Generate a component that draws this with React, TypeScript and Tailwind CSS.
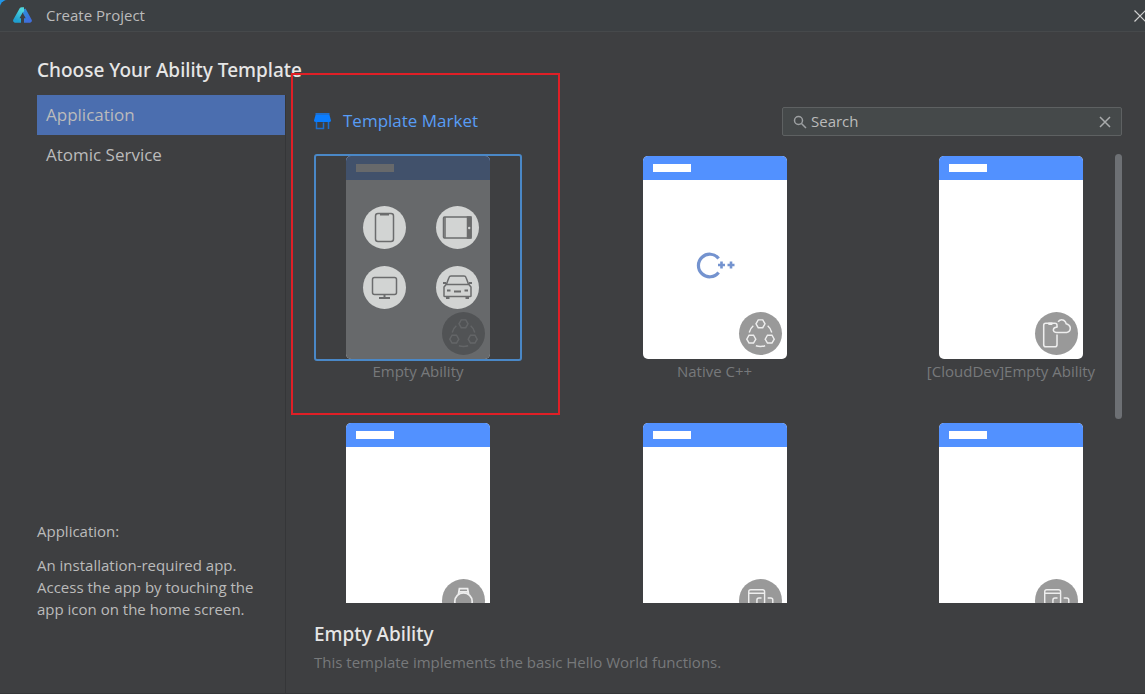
import { useState } from 'react';
import type { ReactNode } from 'react';

interface Template {
    id: string;
    name?: string;
    badge: ReactNode;
    art?: ReactNode;
}

const Logo = () => (
    <svg width="19" height="17" viewBox="0 0 19 17" fill="none" strokeWidth="4.600" strokeLinejoin="round" aria-hidden="true">
        <defs>
            <linearGradient id="logoLeft" x1="0.6" y1="0" x2="0.2" y2="1">
                <stop offset="0" stopColor="#4fd6dc" />
                <stop offset="1" stopColor="#1f9fd0" />
            </linearGradient>
            <linearGradient id="logoRight" x1="0.2" y1="0" x2="0.8" y2="1">
                <stop offset="0" stopColor="#2c8fd8" />
                <stop offset="1" stopColor="#3f6fdc" />
            </linearGradient>
        </defs>
        <path d="M10.500 2.500 L16.500 13.500 H11" stroke="url(#logoRight)" />
        <path d="M11 2.500 H8.700 L2.500 13.500 H8" stroke="url(#logoLeft)" />
    </svg>
);

const StoreIcon = () => (
    <svg width="17" height="18" viewBox="0 0 17 18" aria-hidden="true">
        <rect x="1.500" y="1" width="14" height="2" fill="#1c6fd0" />
        <path d="M1.500 3 H15.500 L17 8.500 Q17 10 15 10 H2 Q0 10 0 8.500 Z" fill="#0a7dff" />
        <path d="M2.500 10 V16.500 H9.500 V10.500 M14.500 10 V17" fill="none" stroke="#1c6fd0" strokeWidth="1.500" />
    </svg>
);

const NodesIcon = () => (
    <svg width="43" height="43" viewBox="0 0 42 42" fill="none" stroke="currentColor" strokeWidth="1.400" aria-hidden="true">
        <path d="M18.800 7.700 h4.400 l2.200 3.800 l-2.200 3.800 h-4.400 l-2.200 -3.800 Z" />
        <path d="M9.800 22.700 h4.400 l2.200 3.800 l-2.200 3.800 h-4.400 l-2.200 -3.800 Z" />
        <path d="M27.800 22.700 h4.400 l2.200 3.800 l-2.200 3.800 h-4.400 l-2.200 -3.800 Z" />
        <path d="M10 20 Q11 16 14 13.500 M28 13.500 Q31 16 32 20 M16.500 33 Q21 34.500 25.500 33" />
    </svg>
);

const CloudIcon = () => (
    <svg width="43" height="43" viewBox="0 0 42 42" fill="none" stroke="currentColor" strokeWidth="1.500" aria-hidden="true">
        <path d="M21.500 22 V32 Q21.500 34 19.500 34 H10.500 Q8.500 34 8.500 32 V13 Q8.500 11 10.500 11 H19.500 Q21.500 11 21.500 13 V15" />
        <path d="M13 11.500 H17" strokeWidth="2.500" />
        <path d="M21 20 Q17.500 19.500 18 17 Q18.500 14.500 22 15 M22.500 9.500 Q25 6.500 28 8 Q30 9 30.500 11.500 Q34 12.500 34.500 15.500 Q34.500 19.500 31 20 H21" />
    </svg>
);

const WatchIcon = () => (
    <svg width="43" height="43" viewBox="0 0 42 42" fill="none" stroke="currentColor" strokeWidth="1.700" aria-hidden="true">
        <circle cx="21" cy="22" r="8.500" />
        <path d="M16 15 L17 9.500 H25 L26 15 M17 12.500 H25 M16 29 L17 34.500 H25 L26 29" />
    </svg>
);

const DevicesIcon = () => (
    <svg width="43" height="43" viewBox="0 0 42 42" fill="none" stroke="currentColor" strokeWidth="1.400" aria-hidden="true">
        <path d="M15 25 H12 Q9.500 25 9.500 22.500 V12.500 Q9.500 10.500 11.500 10.500 H23 Q25 10.500 25 12.500 V22.500 Q25 25 22.500 25 M9.500 14 H25" />
        <path d="M22 18.500 H19.500 Q17.500 18.500 17.500 20.500 V31 H24 M28 18.500 H31 Q33 18.500 33 20.500 V31 H29" />
    </svg>
);

const CppArt = () => (
    <svg width="40" height="28" viewBox="0 0 40 28" fill="none" stroke="#7493cf" strokeWidth="3.200" className="absolute left-[53px] top-[95px]" aria-hidden="true">
        <path d="M22.600 7.500 A11.300 11.300 0 1 0 22.600 21.500" />
        <path d="M22 14 H29 M25.500 10.500 V17.500 M31.500 14 H38.500 M35 10.500 V17.500" strokeWidth="2.600" />
    </svg>
);

const devices = [
    {
        id: 'phone',
        drawing: (
            <>
                <rect x="12.500" y="7.500" width="18" height="28" rx="2.500" />
                <path d="M17 8.500 H26" strokeWidth="2.200" />
            </>
        ),
    },
    {
        id: 'tablet',
        drawing: (
            <>
                <rect x="7.500" y="11" width="27.500" height="21" rx="1" />
                <path d="M9 11 V32" strokeWidth="1.500" />
                <rect x="31.500" y="11" width="3.500" height="21" fill="#6b6c6d" />
                <circle cx="33.200" cy="22" r="1.200" fill="#d2d4d3" stroke="none" />
            </>
        ),
    },
    {
        id: 'monitor',
        drawing: (
            <>
                <rect x="9.500" y="11.500" width="24" height="17" rx="2" />
                <path d="M21.500 29 V32 M16 32 H27" strokeWidth="2" />
            </>
        ),
    },
    {
        id: 'car',
        drawing: (
            <>
                <path d="M8 30 V21 L10.500 18 L13 11.500 Q13.500 10 15 10 H28 Q29.500 10 30 11.500 L32.500 18 L35 21 V30 Q35 30.500 34 30.500 H9 Q8 30.500 8 30 Z M10.500 18.500 H32.500" />
                <path d="M7 17 H10 M33 17 H36 M11 24.500 H14.500 M28.500 24.500 H32 M18 25.500 H25 M10 32 H13.500 M29.500 32 H33" strokeWidth="2" />
            </>
        ),
    },
];

const DeviceOverlay = () => (
    <div className="absolute inset-0 grid grid-cols-[43px_43px] content-start gap-x-[30px] gap-y-[17px] bg-[#3c3f41]/78 pl-[17px] pt-[50px]">
        {devices.map((device) => (
            <span key={device.id} className="rounded-full bg-[#d2d4d3]">
                <svg width="43" height="43" viewBox="0 0 43 43" fill="none" stroke="#6b6c6d" strokeWidth="1.500" aria-hidden="true">
                    {device.drawing}
                </svg>
            </span>
        ))}
    </div>
);

const templates: Template[] = [
    { id: 'empty', name: 'Empty Ability', badge: <NodesIcon />, art: <DeviceOverlay /> },
    { id: 'native', name: 'Native C++', badge: <NodesIcon />, art: <CppArt /> },
    { id: 'cloud', name: '[CloudDev]Empty Ability', badge: <CloudIcon /> },
    { id: 'watch', badge: <WatchIcon /> },
    { id: 'devices', badge: <DevicesIcon /> },
    { id: 'devices2', badge: <DevicesIcon /> },
];

const TemplateCard = ({ template, selected, onSelect }: { template: Template; selected: boolean; onSelect: () => void }) => (
    <button type="button" onClick={onSelect} className="flex flex-col items-center">
        <span className={`flex w-full justify-center rounded-[3px] border-2 ${selected ? 'border-[#4a88c7]' : 'border-transparent'}`}>
            <span className="relative block h-[203px] w-36 overflow-hidden rounded-[5px] bg-white">
                <span className="block h-6 bg-[#5291ff] pl-[10px] pt-2">
                    <span className="block h-2 w-[38px] bg-white" />
                </span>
                <span className="absolute bottom-1 right-[5px] rounded-full bg-[#999999] text-[#eeeeee]">{template.badge}</span>
                {template.art}
            </span>
        </span>
        <span className="h-5 whitespace-nowrap text-[15px] leading-5 text-[#77797b]">{template.name}</span>
    </button>
);

export default function App() {
    const [category, setCategory] = useState('Application');
    const [selected, setSelected] = useState('empty');
    const [query, setQuery] = useState('');

    return (
        <div className="h-screen bg-[#2196e8] font-['Open_Sans','Noto_Sans',sans-serif] text-[#bbbbbb]">
            <div className="flex h-full flex-col overflow-hidden rounded-tl-lg border-b border-[#353638] bg-[#3e3f41]">
                <header className="flex h-8 shrink-0 items-center border-b border-[#46494b] bg-[#3c4043] pl-[13px]">
                    <Logo />
                    <span className="ml-[14px] text-[15px]">Create Project</span>
                    <button type="button" aria-label="Close" className="ml-auto">
                        <svg width="11" height="14" viewBox="0 0 11 14" fill="none" stroke="#d0d0d0" strokeWidth="1.200" aria-hidden="true">
                            <path d="M0.500 1.500 L11.500 12.500 M11.500 1.500 L0.500 12.500" />
                        </svg>
                    </button>
                </header>
                <h1 className="pb-[11px] pl-[37px] pt-6 font-['Noto_Sans',sans-serif] text-[19px] font-medium leading-7 text-[#e6e6e6]">
                    Choose Your Ability Template
                </h1>
                <div className="flex min-h-0 flex-1">
                    <aside className="flex w-[286px] shrink-0 flex-col border-r border-[#353638] pb-[73px] pl-[37px]">
                        <nav className="flex flex-col">
                            {['Application', 'Atomic Service'].map((item) => (
                                <button
                                    key={item}
                                    type="button"
                                    onClick={() => setCategory(item)}
                                    className={`h-10 pl-[9px] text-left text-[17px] ${category === item ? 'bg-[#4b6eaf]' : ''}`}
                                >
                                    {item}
                                </button>
                            ))}
                        </nav>
                        <div className="mt-auto pr-6 text-[15px] leading-[22px]">
                            <p className="mb-3">Application:</p>
                            <p>
                                An installation-required app.
                                <br />
                                Access the app by touching the
                                <br />
                                app icon on the home screen.
                            </p>
                        </div>
                    </aside>
                    <main className="relative flex min-w-0 flex-1 flex-col pl-7 pr-[23px] pt-3">
                        <div className="mb-[18px] flex items-start justify-between">
                            <a href="#market" className="flex items-center gap-3 text-[17px] leading-7 text-[#589df6]">
                                <StoreIcon />
                                Template Market
                            </a>
                            <div className="flex h-[29px] w-[340px] items-center rounded-xs border border-[#5e6162] bg-[#45494a] px-[10px]">
                                <svg width="14" height="14" viewBox="0 0 14 14" fill="none" stroke="#9da0a2" strokeWidth="1.500" aria-hidden="true">
                                    <circle cx="5.500" cy="5.500" r="4" />
                                    <path d="M8.500 8.500 L13 13" />
                                </svg>
                                <input
                                    type="text"
                                    aria-label="Search"
                                    placeholder="Search"
                                    value={query}
                                    onChange={(e) => setQuery(e.target.value)}
                                    className="ml-1 min-w-0 flex-1 bg-transparent pb-0.5 text-[15px] leading-5 outline-none placeholder:text-[#bbbbbb]"
                                />
                                <button type="button" aria-label="Clear" onClick={() => setQuery('')}>
                                    <svg width="12" height="12" viewBox="0 0 12 12" fill="none" stroke="#a9abac" strokeWidth="1.500" aria-hidden="true">
                                        <path d="M1 1 L11 11 M11 1 L1 11" />
                                    </svg>
                                </button>
                            </div>
                        </div>
                        <div className="flex min-h-0 flex-1">
                            <div className="grid flex-1 grid-cols-[repeat(3,208px)] content-start justify-between gap-y-10 overflow-y-auto [scrollbar-width:none]">
                                {templates.map((template) => (
                                    <TemplateCard
                                        key={template.id}
                                        template={template}
                                        selected={selected === template.id}
                                        onSelect={() => setSelected(template.id)}
                                    />
                                ))}
                            </div>
                            <div className="h-[59%] w-[7px] rounded-full bg-[#6d7074]" />
                        </div>
                        <div className="h-[90px] pt-[17px]">
                            <h2 className="font-['Noto_Sans',sans-serif] text-[19px] font-medium leading-7 text-[#e6e6e6]">Empty Ability</h2>
                            <p className="mt-1 text-[15px] leading-5 text-[#77797b]">This template implements the basic Hello World functions.</p>
                        </div>
                        <div className="pointer-events-none absolute left-[5px] top-[-22px] h-[342px] w-[269px] border-2 border-[#e01f26]" />
                    </main>
                </div>
            </div>
        </div>
    );
}
